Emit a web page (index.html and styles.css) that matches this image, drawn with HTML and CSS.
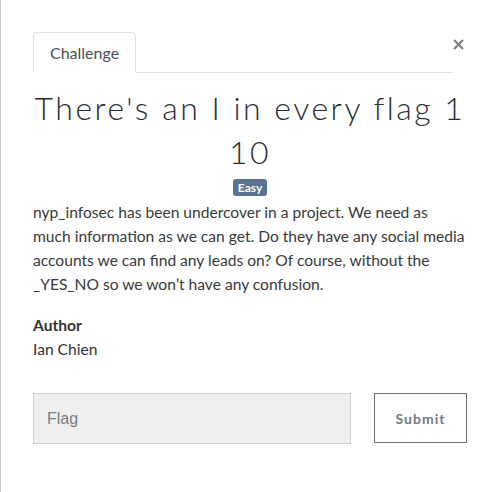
FILE: index.html
```html
<!DOCTYPE html>
<html lang="en">
<head>
<meta charset="utf-8">
<title>Challenge</title>
<link rel="stylesheet" href="styles.css">
</head>
<body>
<div class="modal">
  <div class="modal-header">
    <ul class="nav-tabs">
      <li class="tab active">Challenge</li>
    </ul>
    <button class="close" type="button" aria-label="Close">
      <svg width="11" height="11" viewBox="0 0 11 11"><path d="M1 1 L10 10 M10 1 L1 10" stroke="#7d7d7d" stroke-width="2" fill="none"/></svg>
    </button>
  </div>
  <h3 class="title">There's an I in every flag 1 10</h3>
  <div class="badge-row"><span class="badge">Easy</span></div>
  <p class="desc">nyp_infosec has been undercover in a project. We need as much information as we can get. Do they have any social media accounts we can find any leads on? Of course, without the _YES_NO so we won’t have any confusion.</p>
  <div class="author">
    <div class="author-label">Author</div>
    <div class="author-name">Ian Chien</div>
  </div>
  <form class="flag-form">
    <input class="flag-input" type="text" placeholder="Flag">
    <button class="submit" type="button">Submit</button>
  </form>
</div>
</body>
</html>
```

FILE: styles.css
```css
html, body {
  margin: 0;
  padding: 0;
  background: #fff;
}
.modal {
  box-sizing: border-box;
  min-height: 100vh;
  border-left: 1px solid #c9c9c9;
  padding: 32px 31px 20px 32px;
  font-family: Lato, "Liberation Sans", sans-serif;
  color: #333;
}
.modal-header {
  display: flex;
  align-items: flex-start;
}
.nav-tabs {
  flex: 1;
  list-style: none;
  margin: 0;
  padding: 0;
  display: flex;
  border-bottom: 1px solid #dee2e6;
}
.tab {
  box-sizing: border-box;
  height: 41px;
  margin-bottom: -1px;
  padding: 0 16px;
  border: 1px solid #dee2e6;
  border-bottom-color: #fff;
  border-radius: 4px 4px 0 0;
  font-size: 16px;
  line-height: 40px;
  color: #495057;
  background: #fff;
}
.close {
  width: 14px;
  padding: 0;
  margin: 7px 0 0 0;
  border: 0;
  background: none;
  line-height: 0;
  text-align: left;
  cursor: pointer;
}
.title {
  margin: 13px 0 0;
  text-align: center;
  font-family: Lato, sans-serif;
  font-weight: 300;
  font-size: 32px;
  line-height: 44px;
  letter-spacing: 2.5px;
  color: #2a2e33;
}
.badge-row {
  text-align: center;
  line-height: 0;
  margin-top: 5px;
}
.badge {
  display: inline-block;
  padding: 3px 5px;
  font-size: 12px;
  font-weight: 700;
  line-height: 11px;
  color: #fff;
  background: #5b7291;
  border-radius: 3px;
}
.desc {
  margin: 4px 0 17px;
  font-size: 15.6px;
  line-height: 24px;
  color: #3a3a3a;
}
.author {
  font-size: 15.6px;
  line-height: 24px;
  color: #333;
}
.author-label {
  font-weight: 700;
}
.flag-form {
  display: flex;
  gap: 23px;
  margin-top: 32px;
}
.flag-input {
  box-sizing: border-box;
  flex: 0 0 318px;
  height: 51px;
  margin: 0;
  padding: 0 13px;
  border: 1px solid #ced3d8;
  background: #efefef;
  font-family: "Liberation Sans", Arial, sans-serif;
  font-size: 16px;
  color: #495057;
  outline: none;
}
.flag-input::placeholder {
  color: #7b8085;
}
.submit {
  box-sizing: border-box;
  width: 93px;
  height: 50px;
  margin: 0;
  padding: 0;
  border: 1px solid #6c737b;
  background: #fff;
  font-family: Lato, sans-serif;
  font-size: 14px;
  font-weight: 700;
  letter-spacing: 1px;
  color: #747a82;
}
```
